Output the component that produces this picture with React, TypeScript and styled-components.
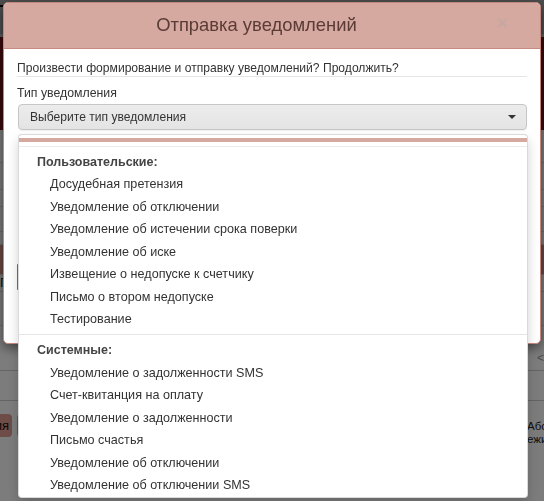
import React from "react";
import styled, { createGlobalStyle } from "styled-components";

const Global = createGlobalStyle`
  html, body { margin: 0; padding: 0; }
  body {
    font-family: "Liberation Sans", Arial, sans-serif;
    font-size: 13px;
    color: #333;
    width: 544px;
    height: 501px;
    overflow: hidden;
  }
  * { box-sizing: border-box; }
`;

/* ---------- background page (under the overlay) ---------- */
const Page = styled.div`
  width: 544px;
  height: 501px;
  overflow: hidden;
  background: #f8f8f8;
  display: flex;
  flex-direction: column;
`;

const TopBar = styled.div`
  height: 37px;
  background: #9c9c9c;
  border-bottom: 3px solid #b8b8b8;
  display: flex;
  align-items: flex-start;
  padding-top: 5px;
`;

const TopDash = styled.span`
  width: 6px;
  height: 2px;
  background: #000;
`;

const Banner = styled.div`
  height: 93px;
  background: #761419;
`;

const TableRow = styled.div<{ $h: number; $bg?: string }>`
  height: ${(p) => p.$h}px;
  background: ${(p) => p.$bg || "#f8f8f8"};
  border-bottom: 1px solid #d8d8d8;
  font-size: 13px;
  line-height: ${(p) => p.$h - 1}px;
  color: #222;
  flex-shrink: 0;
  white-space: nowrap;
`;

const BottomArea = styled.div`
  margin-top: auto;
  display: flex;
  flex-direction: column;
`;

const PagerRow = styled.div`
  height: 28px;
  border-bottom: 1px solid #c8c8c8;
  display: flex;
  justify-content: flex-end;
  align-items: center;
  padding-top: 3px;
  color: #999;
  font-size: 12px;
`;

const EmptyRow = styled.div`
  height: 30px;
  border-bottom: 1px solid #c8c8c8;
`;

const Toolbar = styled.div`
  display: flex;
  align-items: flex-start;
  padding-top: 13px;
  height: 100px;
`;

const ClipLeft = styled.div`
  width: 12px;
  display: flex;
  justify-content: flex-end;
`;

const ToolButton = styled.div<{ $ml?: number; $w?: number }>`
  flex-shrink: 0;
  height: 23px;
  margin-left: ${(p) => p.$ml || 0}px;
  ${(p) => (p.$w ? `width: ${p.$w}px;` : "")}
  padding: 0 3px 0 8px;
  line-height: 23px;
  border-radius: 4px;
  background: #dc988e;
  color: #111;
  font-size: 13px;
  white-space: nowrap;
`;

const InfoBlock = styled.div`
  margin-left: auto;
  width: 17px;
  overflow: hidden;
  padding-top: 6px;
  font-size: 11.5px;
  line-height: 13px;
  color: #222;
  white-space: nowrap;
`;

const Overlay = styled.div`
  position: fixed;
  inset: 0;
  background: rgba(0, 0, 0, 0.5);
`;

/* ---------- modal ---------- */
const Modal = styled.div`
  position: fixed;
  left: 3px;
  top: 2px;
  width: 538px;
  height: 342px;
  background: #fff;
  border: 1px solid #c4877d;
  border-radius: 5px;
  box-shadow: 0 4px 12px rgba(0, 0, 0, 0.5);
  display: flex;
  flex-direction: column;
`;

const Header = styled.div`
  height: 46px;
  flex-shrink: 0;
  background: #d5a8a0;
  border-bottom: 1px solid #c98b80;
  border-radius: 4px 4px 0 0;
  display: flex;
  align-items: center;
  padding: 0 32px 0 15px;
`;

const Title = styled.div`
  flex: 1;
  text-align: center;
  font-size: 18.4px;
  color: #5b3b36;
  padding-bottom: 1px;
`;

const Close = styled.span`
  font-size: 19px;
  font-weight: bold;
  color: #c6a8a2;
  margin-left: 3px;
  margin-top: -6px;
  line-height: 1;
`;

const Body = styled.div`
  padding: 11px 13px 0 14px;
  display: flex;
  flex-direction: column;
`;

const Question = styled.div`
  font-size: 12.1px;
  line-height: 16px;
  border-bottom: 1px solid #e5e5e5;
  margin-bottom: -1px;
  margin-left: -1px;
`;

const Label = styled.div`
  margin-top: 9px;
  margin-left: -1px;
  font-size: 12.3px;
  line-height: 16px;
`;

const SelectWrap = styled.div`
  position: relative;
  margin-top: 3px;
`;

const Select = styled.div`
  height: 26px;
  border: 1px solid #c6c6c6;
  border-radius: 4px;
  background: linear-gradient(#ececec, #e4e4e4);
  box-shadow: 0 1px 1px rgba(0, 0, 0, 0.06);
  display: flex;
  align-items: center;
  padding: 0 10px 0 11px;
  color: #333;
  font-size: 12.1px;
`;

const SelectText = styled.span`
  flex: 1;
`;

const Caret = styled.span`
  width: 0;
  height: 0;
  border-left: 4px solid transparent;
  border-right: 4px solid transparent;
  border-top: 4px solid #333;
`;

const Field = styled.div<{ $mt: number; $focus?: boolean }>`
  margin-top: ${(p) => p.$mt}px;
  height: 26px;
  width: 510px;
  margin-left: ${(p) => (p.$focus ? -1 : 0)}px;
  border: 1px solid ${(p) => (p.$focus ? "#ffffff" : "#8f8f8f")};
  border-left: ${(p) => (p.$focus ? "3px solid #2f7de1" : "1px solid #ffffff")};
`;

/* ---------- dropdown ---------- */
const Menu = styled.div`
  position: absolute;
  left: 0;
  top: 30px;
  width: 510px;
  height: 364px;
  background: #fff;
  border: 1px solid rgba(0, 0, 0, 0.15);
  border-radius: 4px;
  box-shadow: 0 6px 12px rgba(0, 0, 0, 0.175);
  padding-top: 3px;
  z-index: 2;
`;

const ActiveBar = styled.div`
  height: 4px;
  background: #d5a8a0;
`;

const TopRule = styled.div`
  margin-top: 4px;
  height: 1px;
  background: #ececec;
  margin-bottom: 3.5px;
`;

const Group = styled.div``;

const GroupTitle = styled.div`
  font-weight: bold;
  font-size: 12.5px;
  color: #444;
  line-height: 22.5px;
  padding-left: 18px;
`;

const Item = styled.div`
  font-size: 12.6px;
  line-height: 22.5px;
  padding-left: 31px;
  color: #333;
  white-space: nowrap;
`;

const Divider = styled.div`
  height: 1px;
  background: #e5e5e5;
  margin: 3.5px 0 4px;
`;

const userItems = [
  "Досудебная претензия",
  "Уведомление об отключении",
  "Уведомление об истечении срока поверки",
  "Уведомление об иске",
  "Извещение о недопуске к счетчику",
  "Письмо о втором недопуске",
  "Тестирование",
];

const systemItems = [
  "Уведомление о задолженности SMS",
  "Счет-квитанция на оплату",
  "Уведомление о задолженности",
  "Письмо счастья",
  "Уведомление об отключении",
  "Уведомление об отключении SMS",
];

export default function App() {
  return (
    <>
      <Global />
      <Page>
        <TopBar>
          <TopDash />
        </TopBar>
        <Banner />
        <TableRow $h={33} />
        <TableRow $h={27} />
        <TableRow $h={17} />
        <TableRow $h={25} />
        <TableRow $h={13} />
        <TableRow $h={30} $bg="#d4948a" />
        <TableRow $h={17}>П</TableRow>
        <TableRow $h={34} />
        <BottomArea>
          <PagerRow>&lt;</PagerRow>
          <EmptyRow />
          <Toolbar>
            <ClipLeft>
              <ToolButton>Уведомления</ToolButton>
            </ClipLeft>
            <ToolButton $ml={5} $w={70} />
            <InfoBlock>
              Абонент
              <br />
              ежим
            </InfoBlock>
          </Toolbar>
        </BottomArea>
      </Page>
      <Overlay />
      <Modal>
        <Header>
          <Title>Отправка уведомлений</Title>
          <Close>×</Close>
        </Header>
        <Body>
          <Question>Произвести формирование и отправку уведомлений? Продолжить?</Question>
          <Label>Тип уведомления</Label>
          <SelectWrap>
            <Select>
              <SelectText>Выберите тип уведомления</SelectText>
              <Caret />
            </Select>
            <Menu>
              <ActiveBar />
              <TopRule />
              <Group>
                <GroupTitle>Пользовательские:</GroupTitle>
                {userItems.map((t) => (
                  <Item key={t}>{t}</Item>
                ))}
              </Group>
              <Divider />
              <Group>
                <GroupTitle>Системные:</GroupTitle>
                {systemItems.map((t, i) => (
                  <Item key={t + i}>{t}</Item>
                ))}
              </Group>
            </Menu>
          </SelectWrap>
          <Field $mt={30} />
          <Field $mt={30} />
          <Field $mt={22} $focus />
        </Body>
      </Modal>
    </>
  );
}
